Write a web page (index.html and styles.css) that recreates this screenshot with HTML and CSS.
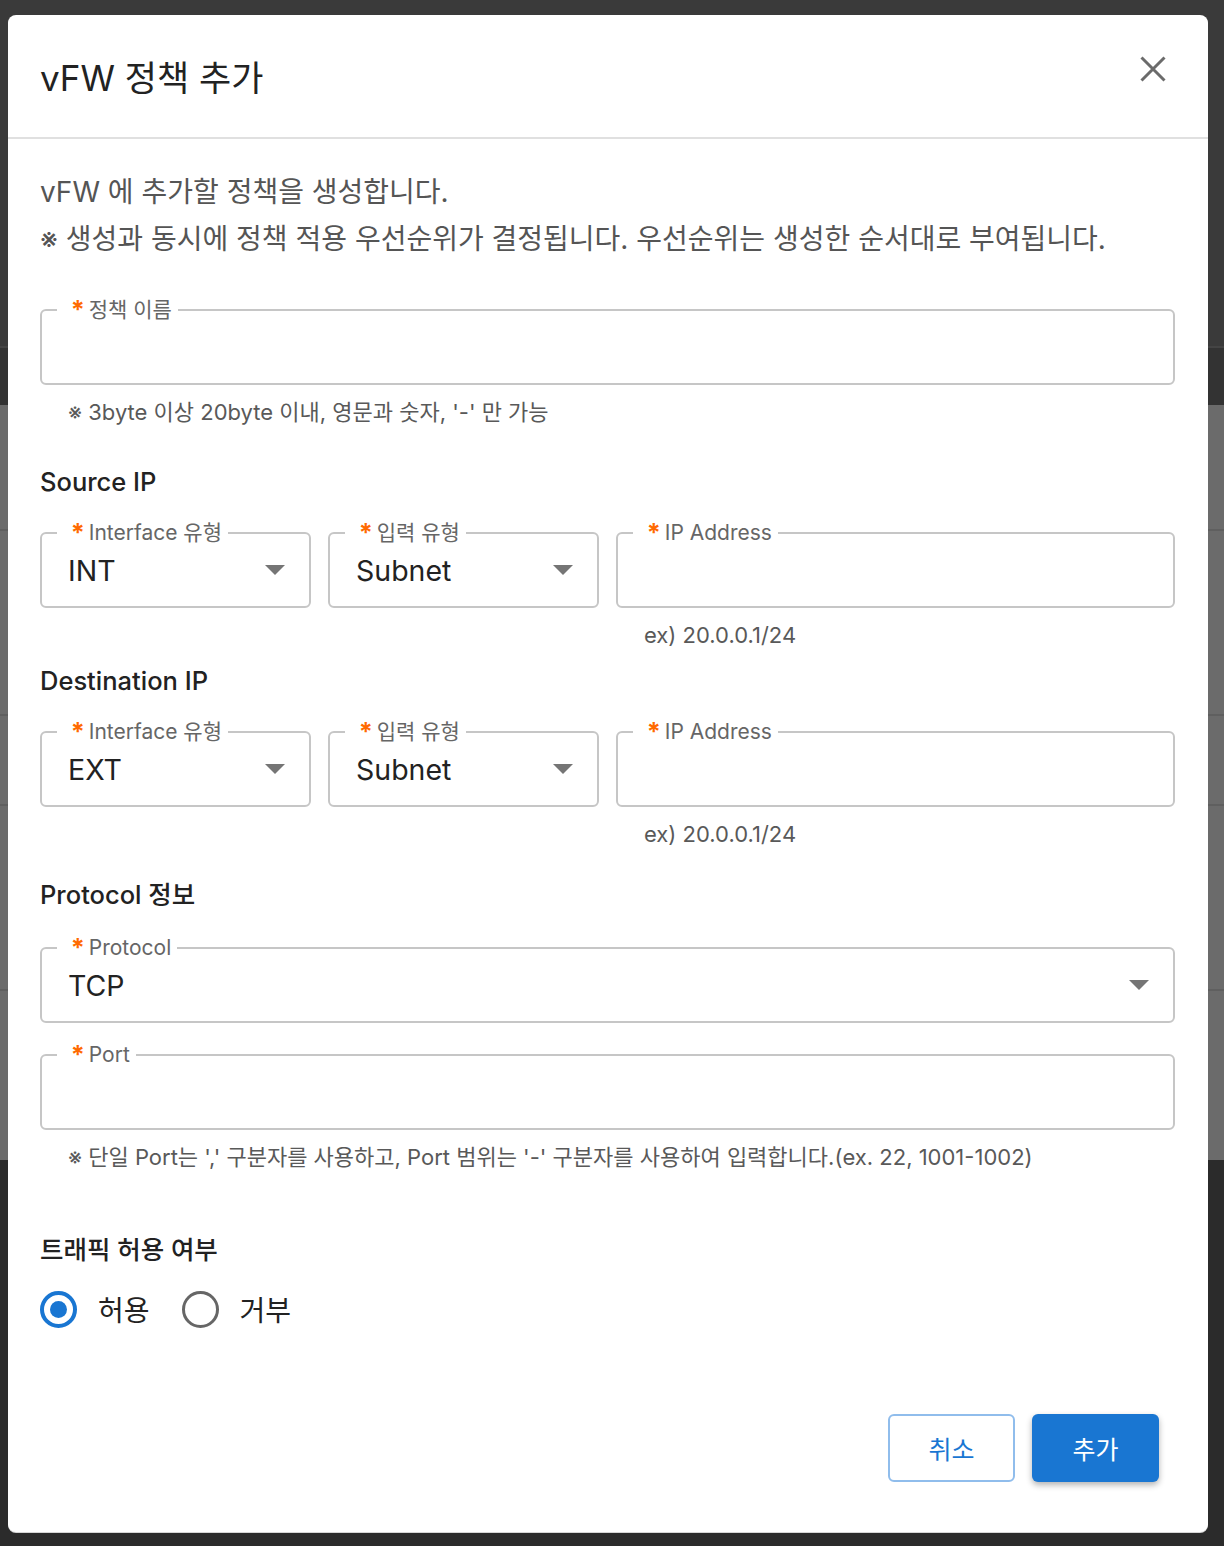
FILE: index.html
```html
<!DOCTYPE html>
<html lang="ko">
<head>
<meta charset="utf-8">
<title>vFW 정책 추가</title>
<link rel="stylesheet" href="styles.css">
</head>
<body>
<div class="backdrop">
  <div class="modal">
    <header class="modal-header">
      <h1 class="modal-title">vFW 정책 추가</h1>
      <button class="close-btn" type="button" aria-label="닫기">
        <svg width="26" height="26" viewBox="0 0 26 26"><path d="M1.5 1.5 L24.5 24.5 M24.5 1.5 L1.5 24.5" stroke="#6b6b6b" stroke-width="3" fill="none"/></svg>
      </button>
    </header>

    <div class="modal-body">
      <p class="desc">vFW 에 추가할 정책을 생성합니다.<br>※ 생성과 동시에 정책 적용 우선순위가 결정됩니다. 우선순위는 생성한 순서대로 부여됩니다.</p>

      <fieldset class="field f-name">
        <legend><span class="req">*</span>정책 이름</legend>
        <div class="value"></div>
      </fieldset>
      <p class="helper">※ 3byte 이상 20byte 이내, 영문과 숫자, '-' 만 가능</p>

      <h2 class="section-title st-source">Source IP</h2>
      <div class="row">
        <fieldset class="field">
          <legend><span class="req">*</span>Interface 유형</legend>
          <div class="value select"><span>INT</span><svg class="arrow" width="20" height="10" viewBox="0 0 20 10"><path d="M0 0 H20 L10 10 Z" fill="#757575"/></svg></div>
        </fieldset>
        <fieldset class="field">
          <legend><span class="req">*</span>입력 유형</legend>
          <div class="value select"><span>Subnet</span><svg class="arrow" width="20" height="10" viewBox="0 0 20 10"><path d="M0 0 H20 L10 10 Z" fill="#757575"/></svg></div>
        </fieldset>
        <div class="col">
          <fieldset class="field">
            <legend><span class="req">*</span>IP Address</legend>
            <div class="value"></div>
          </fieldset>
          <p class="helper">ex) 20.0.0.1/24</p>
        </div>
      </div>

      <h2 class="section-title st-dest">Destination IP</h2>
      <div class="row">
        <fieldset class="field">
          <legend><span class="req">*</span>Interface 유형</legend>
          <div class="value select"><span>EXT</span><svg class="arrow" width="20" height="10" viewBox="0 0 20 10"><path d="M0 0 H20 L10 10 Z" fill="#757575"/></svg></div>
        </fieldset>
        <fieldset class="field">
          <legend><span class="req">*</span>입력 유형</legend>
          <div class="value select"><span>Subnet</span><svg class="arrow" width="20" height="10" viewBox="0 0 20 10"><path d="M0 0 H20 L10 10 Z" fill="#757575"/></svg></div>
        </fieldset>
        <div class="col">
          <fieldset class="field">
            <legend><span class="req">*</span>IP Address</legend>
            <div class="value"></div>
          </fieldset>
          <p class="helper">ex) 20.0.0.1/24</p>
        </div>
      </div>

      <h2 class="section-title st-proto">Protocol 정보</h2>
      <fieldset class="field f-proto">
        <legend><span class="req">*</span>Protocol</legend>
        <div class="value select"><span>TCP</span><svg class="arrow" width="20" height="10" viewBox="0 0 20 10"><path d="M0 0 H20 L10 10 Z" fill="#757575"/></svg></div>
      </fieldset>
      <fieldset class="field f-port">
        <legend><span class="req">*</span>Port</legend>
        <div class="value"></div>
      </fieldset>
      <p class="helper">※ 단일 Port는 ',' 구분자를 사용하고, Port 범위는 '-' 구분자를 사용하여 입력합니다.(ex. 22, 1001-1002)</p>

      <h2 class="section-title st-traffic">트래픽 허용 여부</h2>
      <div class="radios">
        <label class="radio"><span class="radio-circle checked"></span><span class="radio-text">허용</span></label>
        <label class="radio"><span class="radio-circle"></span><span class="radio-text">거부</span></label>
      </div>
    </div>

    <footer class="modal-footer">
      <button class="btn btn-outline" type="button">취소</button>
      <button class="btn btn-primary" type="button">추가</button>
    </footer>
  </div>
</div>
</body>
</html>
```

FILE: styles.css
```css
* { box-sizing: border-box; }

html, body {
  margin: 0;
  padding: 0;
}

body {
  width: 1224px;
  height: 1546px;
  overflow: hidden;
  font-family: Inter, "Noto Sans CJK KR", sans-serif;
  color: #222;
  background: linear-gradient(to bottom,
    #3a3a3a 0, #3a3a3a 346px,
    #444 346px, #444 348px,
    #333 348px, #333 405px,
    #6b6b6b 405px, #6b6b6b 529px,
    #5f5f5f 529px, #5f5f5f 531px,
    #6b6b6b 531px, #6b6b6b 714px,
    #5f5f5f 714px, #5f5f5f 716px,
    #6b6b6b 716px, #6b6b6b 804px,
    #5f5f5f 804px, #5f5f5f 806px,
    #6b6b6b 806px, #6b6b6b 989px,
    #5f5f5f 989px, #5f5f5f 991px,
    #6b6b6b 991px, #6b6b6b 1160px,
    #2b2b2b 1160px, #2b2b2b 100%);
}

.backdrop {
  padding: 15px 16px 0 8px;
}

.modal {
  width: 1200px;
  height: 1517px;
  background: #fff;
  border-radius: 8px;
  display: flex;
  flex-direction: column;
  box-shadow: 0 1px 0 #d6d6d6;
}

.modal-header {
  height: 124px;
  border-bottom: 2px solid #e0e0e0;
  display: flex;
  align-items: center;
  justify-content: space-between;
  padding: 0 42px 0 32px;
}

.modal-title {
  margin: 0 0 2px;
  font-size: 35px;
  font-weight: 400;
  color: #222;
  letter-spacing: 0;
}

.close-btn {
  border: 0;
  background: transparent;
  padding: 0;
  width: 26px;
  height: 26px;
  margin-bottom: 14px;
  display: flex;
}

.modal-body {
  padding: 30px 33px 0 32px;
}

.desc {
  margin: 0;
  font-size: 28px;
  line-height: 47px;
  color: #555;
}

.field {
  margin: 0;
  border: 2px solid #c6c6c6;
  border-radius: 6px;
  padding: 0 24px 8px 26px;
  min-width: 0;
}

.field legend {
  margin-left: -11px;
  padding: 0 6px 0 15px;
  font-size: 21px;
  line-height: 22px;
  height: 22px;
  color: #666;
}

.req {
  display: inline-block;
  color: #ff6a00;
  font-weight: 700;
  margin-right: 5px;
  transform: scale(1.2);
  transform-origin: center 40%;
}

.value {
  height: 54px;
  font-size: 28.5px;
  line-height: 54px;
  color: #222;
}

.select {
  display: flex;
  align-items: center;
  justify-content: space-between;
}

.arrow {
  flex: none;
  margin-bottom: 2px;
}

.f-name { margin-top: 36px; }

.helper {
  margin: 13px 0 0;
  padding-left: 28px;
  font-size: 22px;
  line-height: 28px;
  color: #595959;
}

.section-title {
  margin: 0;
  font-size: 25.5px;
  line-height: 30px;
  font-weight: 500;
  color: #222;
}

.st-source { margin-top: 41px; }
.st-dest { margin-top: 17px; }
.st-proto { margin-top: 32px; }
.st-traffic { margin-top: 64px; }

.row {
  display: grid;
  grid-template-columns: 271px 271px 1fr;
  column-gap: 17px;
  margin-top: 25px;
  align-items: start;
}

.f-proto { margin-top: 27px; }
.f-port { margin-top: 21px; }

.radios {
  margin-top: 24px;
  display: flex;
  align-items: center;
  gap: 32px;
  height: 40px;
}

.radio {
  display: flex;
  align-items: center;
  gap: 21px;
}

.radio-circle {
  width: 37px;
  height: 37px;
  border-radius: 50%;
  border: 3.5px solid #666;
  display: flex;
  align-items: center;
  justify-content: center;
}

.radio-circle.checked {
  border: 4px solid #1976d2;
}

.radio-circle.checked::after {
  content: "";
  width: 17px;
  height: 17px;
  border-radius: 50%;
  background: #1976d2;
}

.radio-text {
  font-size: 28px;
  color: #222;
}

.modal-footer {
  margin-top: auto;
  display: flex;
  justify-content: flex-end;
  gap: 17px;
  padding: 0 49px 50px 0;
}

.btn {
  width: 127px;
  height: 68px;
  border-radius: 6px;
  font-family: Inter, "Noto Sans CJK KR", sans-serif;
  font-size: 25px;
  cursor: pointer;
}

.btn-outline {
  background: #fff;
  border: 2px solid #90bdec;
  color: #1976d2;
}

.btn-primary {
  background: #1976d2;
  border: 0;
  color: #fff;
  box-shadow: 0 3px 6px rgba(0, 0, 0, 0.3);
}
```
